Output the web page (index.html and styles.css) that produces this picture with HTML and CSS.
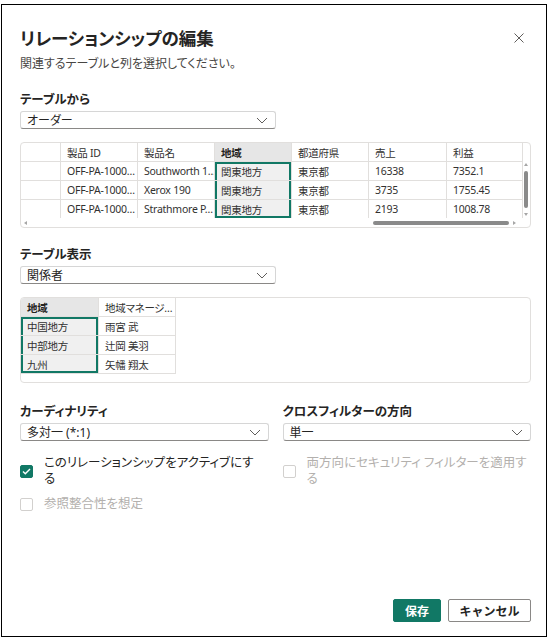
FILE: index.html
```html
<!DOCTYPE html>
<html lang="ja">
<head>
  <meta charset="UTF-8">
  <meta name="viewport" content="width=device-width, initial-scale=1.0">
  <title>リレーションシップの編集</title>
  <link rel="stylesheet" href="styles.css">
</head>
<body>

<div class="dialog">
  <div class="dialog-head">
    <h1 class="title">リレーションシップの編集</h1>
    <button class="close" type="button" aria-label="閉じる">
      <svg width="12" height="12" viewBox="0 0 12 12"><path d="M1.5 1.5 L10.5 10.5 M10.5 1.5 L1.5 10.5" stroke="#605e5c" stroke-width="1" fill="none"/></svg>
    </button>
  </div>
  <p class="subtitle">関連するテーブルと列を選択してください。</p>

  <div class="field-label first">テーブルから</div>
  <div class="select half">
    <span>オーダー</span>
    <svg class="chevron" width="12" height="7" viewBox="0 0 12 7"><path d="M1 1 L6 6 L11 1" stroke="#605e5c" stroke-width="1" fill="none"/></svg>
  </div>

  <div class="grid-box preview">
    <div class="grid-main">
      <table class="grid">
        <tr>
          <th class="rowhead"></th><th>製品 ID</th><th>製品名</th><th class="sel-head">地域</th><th>都道府県</th><th>売上</th><th>利益</th>
        </tr>
        <tr>
          <td class="rowhead"></td><td>OFF-PA-1000…</td><td>Southworth 1…</td><td class="sel top">関東地方</td><td>東京都</td><td>16338</td><td>7352.1</td>
        </tr>
        <tr>
          <td class="rowhead"></td><td>OFF-PA-1000…</td><td>Xerox 190</td><td class="sel">関東地方</td><td>東京都</td><td>3735</td><td>1755.45</td>
        </tr>
        <tr>
          <td class="rowhead"></td><td>OFF-PA-1000…</td><td>Strathmore P…</td><td class="sel bottom">関東地方</td><td>東京都</td><td>2193</td><td>1008.78</td>
        </tr>
      </table>
      <div class="hscroll">
        <span class="arrow arrow-left"></span>
        <span class="hthumb"></span>
        <span class="arrow arrow-right"></span>
      </div>
    </div>
    <div class="vscroll">
      <span class="arrow arrow-up"></span>
      <span class="vthumb"></span>
      <span class="arrow arrow-down"></span>
    </div>
  </div>

  <div class="field-label">テーブル表示</div>
  <div class="select half">
    <span>関係者</span>
    <svg class="chevron" width="12" height="7" viewBox="0 0 12 7"><path d="M1 1 L6 6 L11 1" stroke="#605e5c" stroke-width="1" fill="none"/></svg>
  </div>

  <div class="grid-box small">
    <table class="grid mini">
      <tr>
        <th class="sel-head">地域</th><th>地域マネージ…</th>
      </tr>
      <tr>
        <td class="sel top">中国地方</td><td>雨宮 武</td>
      </tr>
      <tr>
        <td class="sel">中部地方</td><td>辻岡 美羽</td>
      </tr>
      <tr>
        <td class="sel bottom">九州</td><td>矢幡 翔太</td>
      </tr>
    </table>
  </div>

  <div class="two-col options">
    <div>
      <div class="field-label tight">カーディナリティ</div>
      <div class="select">
        <span>多対一 (*:1)</span>
        <svg class="chevron" width="12" height="7" viewBox="0 0 12 7"><path d="M1 1 L6 6 L11 1" stroke="#605e5c" stroke-width="1" fill="none"/></svg>
      </div>
    </div>
    <div>
      <div class="field-label tight">クロスフィルターの方向</div>
      <div class="select">
        <span>単一</span>
        <svg class="chevron" width="12" height="7" viewBox="0 0 12 7"><path d="M1 1 L6 6 L11 1" stroke="#605e5c" stroke-width="1" fill="none"/></svg>
      </div>
    </div>
  </div>

  <div class="two-col checks">
    <label class="check">
      <span class="box checked">
        <svg width="9" height="7" viewBox="0 0 9 7"><path d="M1 3.5 L3.3 5.8 L8 1" stroke="#fff" stroke-width="1.4" fill="none"/></svg>
      </span>
      <span class="check-text narrow">このリレーションシップをアクティブにする</span>
    </label>
    <label class="check disabled">
      <span class="box"></span>
      <span class="check-text">両方向にセキュリティ フィルターを適用する</span>
    </label>
  </div>
  <label class="check disabled single">
    <span class="box"></span>
    <span class="check-text">参照整合性を想定</span>
  </label>

  <div class="actions">
    <button class="btn primary" type="button">保存</button>
    <button class="btn secondary" type="button">キャンセル</button>
  </div>
</div>

</body>
</html>
```

FILE: styles.css
```css
body {
  margin: 0;
  background-color: #fff;
  font-family: "Noto Sans", "Noto Sans CJK JP", sans-serif;
  color: #252423;
  font-feature-settings: "palt";
}
.dialog {
  margin: 4px 0 0 1px;
  width: 546px;
  height: 633px;
  box-sizing: border-box;
  border: 1px solid #000;
  padding: 21px 15px 14px 18px;
  display: flex;
  flex-direction: column;
}
.dialog-head {
  display: flex;
  justify-content: space-between;
  align-items: center;
}
.title {
  margin: 0;
  font-size: 17.5px;
  line-height: 24px;
  font-weight: 700;
}
.close {
  border: none;
  background: none;
  padding: 0;
  margin-right: 6px;
  width: 12px;
  height: 12px;
  display: flex;
}
.subtitle {
  margin: 6px 0 0;
  font-size: 12px;
  line-height: 16px;
  color: #484644;
}
.field-label {
  margin-top: 19px;
  font-size: 12.5px;
  line-height: 16px;
  font-weight: 700;
}
.field-label.first {
  margin-top: 20px;
}
.field-label.tight {
  margin-top: 0;
}
.select {
  margin-top: 3px;
  height: 18px;
  box-sizing: border-box;
  border: 1px solid #d6d6d6;
  border-bottom-color: #8a8886;
  border-radius: 3px;
  padding: 0 7px 0 6px;
  display: flex;
  justify-content: space-between;
  align-items: center;
  font-size: 12px;
  background-color: #fff;
}
.select.half {
  width: 256px;
}
.chevron {
  flex: none;
}

/* table previews */
.grid-box {
  border: 1px solid #e1dfdd;
  border-radius: 4px;
  overflow: hidden;
  display: flex;
}
.preview {
  margin-top: 13px;
  height: 86px;
  box-sizing: border-box;
}
.small {
  margin-top: 13px;
  height: 86px;
  box-sizing: border-box;
}
.grid-main {
  flex: 1;
  min-width: 0;
  display: flex;
  flex-direction: column;
}
.grid {
  border-collapse: separate;
  border-spacing: 0;
  table-layout: fixed;
  font-size: 10.5px;
  letter-spacing: -0.25px;
}
.grid th,
.grid td {
  height: 18px;
  padding: 0 1px 0 6px;
  text-align: left;
  font-weight: 400;
  white-space: nowrap;
  overflow: hidden;
  border-right: 1px solid #e1dfdd;
  border-bottom: 1px solid #e1dfdd;
  color: #323130;
}
.preview .grid {
  width: 502px;
}
/* content widths: column pitch minus 7px padding and 1px rule */
.preview .grid th:nth-child(1) { width: 39px; }
.preview .grid th:nth-child(2),
.preview .grid th:nth-child(3),
.preview .grid th:nth-child(4),
.preview .grid th:nth-child(5) { width: 69px; }
.preview .grid th:nth-child(6) { width: 70px; }
.preview .grid th:nth-child(7) { width: 68px; }
.preview .grid tr:last-child td {
  border-bottom: none;
}
.grid .rowhead {
  padding: 0;
}
.grid th.sel-head {
  background-color: #e6e6e6;
  font-weight: 700;
  color: #252423;
}
.grid td.sel {
  background-color: #f0f0f0;
  box-shadow: inset 2px 0 #117865, inset -2px 0 #117865;
}
.grid td.sel.top {
  box-shadow: inset 2px 0 #117865, inset -2px 0 #117865, inset 0 2px #117865;
}
.grid td.sel.bottom {
  box-shadow: inset 2px 0 #117865, inset -2px 0 #117865, inset 0 -2px #117865;
}
.mini {
  width: 155px;
  align-self: flex-start;
}
.mini th:first-child {
  width: 70px;
}
.mini th:last-child {
  width: 69px;
}

/* fake scrollbars */
.hscroll {
  height: 9px;
  display: flex;
  align-items: center;
  padding: 0 3px;
}
.hthumb {
  margin-left: auto;
  width: 136px;
  height: 4px;
  border-radius: 2px;
  background-color: #8a8a8a;
}
.vscroll {
  flex: none;
  width: 9px;
  display: flex;
  flex-direction: column;
  align-items: center;
  padding-top: 20px;
  padding-bottom: 11px;
}
.vthumb {
  margin: 5px 0;
  width: 4px;
  flex: 1;
  border-radius: 2px;
  background-color: #8a8a8a;
}
.arrow {
  width: 0;
  height: 0;
  flex: none;
}
.arrow-left {
  border-top: 2.5px solid transparent;
  border-bottom: 2.5px solid transparent;
  border-right: 3px solid #a6a6a6;
}
.arrow-right {
  margin-left: 4px;
  margin-right: 2px;
  border-top: 2.5px solid transparent;
  border-bottom: 2.5px solid transparent;
  border-left: 3px solid #a6a6a6;
}
.arrow-up {
  border-left: 2.5px solid transparent;
  border-right: 2.5px solid transparent;
  border-bottom: 3px solid #a6a6a6;
}
.arrow-down {
  border-left: 2.5px solid transparent;
  border-right: 2.5px solid transparent;
  border-top: 3px solid #a6a6a6;
}

/* options */
.two-col {
  display: grid;
  grid-template-columns: 1fr 1fr;
  column-gap: 14px;
}
.options {
  margin-top: 21px;
}
.checks {
  margin-top: 14px;
}
.check {
  display: flex;
  align-items: center;
  gap: 11px;
  font-size: 12.5px;
  line-height: 16px;
}
.check-text.narrow {
  max-width: 214px;
}
.check.disabled {
  color: #b3b0ad;
}
.check.single {
  margin-top: 9px;
}
.box {
  flex: none;
  width: 13px;
  height: 13px;
  box-sizing: border-box;
  border: 1px solid #d2d0ce;
  border-radius: 2px;
  display: flex;
  align-items: center;
  justify-content: center;
}
.box.checked {
  background-color: #117865;
  border-color: #117865;
}

.actions {
  margin-top: auto;
  display: flex;
  justify-content: flex-end;
  gap: 7px;
}
.btn {
  height: 23px;
  padding: 0;
  border: 1px solid #8a8886;
  border-radius: 2px;
  background-color: #fff;
  color: #252423;
  font-family: inherit;
  font-size: 12px;
  font-weight: 700;
  cursor: pointer;
}
.btn.primary {
  width: 48px;
  background-color: #117865;
  border-color: #117865;
  color: #fff;
}
.btn.secondary {
  width: 83px;
}
```
